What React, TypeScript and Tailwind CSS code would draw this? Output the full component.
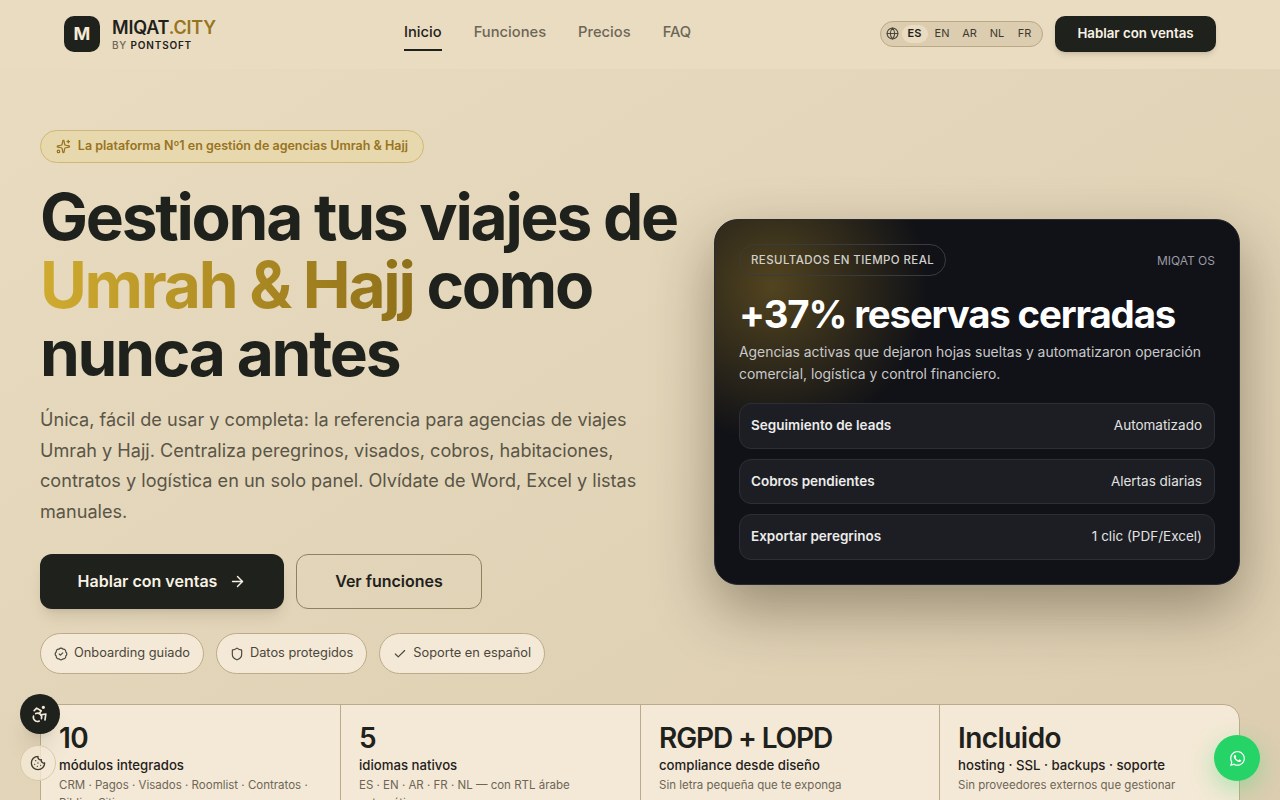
import { Accessibility, ArrowRight, BadgeCheck, Check, Cookie, Globe, Shield, Sparkles } from 'lucide-react'
import { FaWhatsapp } from 'react-icons/fa'

const navLinks = ['Inicio', 'Funciones', 'Precios', 'FAQ']
const langs = ['ES', 'EN', 'AR', 'NL', 'FR']

const rows = [
    { label: 'Seguimiento de leads', value: 'Automatizado', h: 'h-[46px] pb-px' },
    { label: 'Cobros pendientes', value: 'Alertas diarias', h: 'h-[45px]' },
    { label: 'Exportar peregrinos', value: '1 clic (PDF/Excel)', h: 'h-[46px] pb-px' },
]

const stats = [
    { big: '10', title: 'módulos integrados', text: 'CRM · Pagos · Visados · Roomlist · Contratos · Biblia · Sitios', track: 'tracking-[-0.02em]' },
    { big: '5', title: 'idiomas nativos', text: 'ES · EN · AR · FR · NL — con RTL árabe automático', track: 'tracking-[-0.02em]' },
    { big: 'RGPD + LOPD', title: 'compliance desde diseño', text: 'Sin letra pequeña que te exponga', track: 'tracking-[-0.04em]' },
    { big: 'Incluido', title: 'hosting · SSL · backups · soporte', text: 'Sin proveedores externos que gestionar', track: 'tracking-[-0.02em]' },
]

function App() {
    return (
        <div className="h-[800px] overflow-hidden bg-gradient-to-br from-[#e9dcc0] to-[#dccdb0] font-['Inter',sans-serif] text-[#1f211c]">
            <header className="h-[69px] bg-[#e9dcc0]">
                <div className="mx-auto flex h-full w-[1152px] items-center justify-between">
                    <div className="mb-0.5 flex w-[340px] items-center gap-3">
                        <div className="flex h-9 w-9 items-center justify-center rounded-[10px] bg-[#1f211c] text-lg font-bold text-[#f4ead6]">M</div>
                        <div className="mt-[2px]">
                            <div className="text-lg leading-[20px] font-semibold tracking-[-0.01em]">
                                MIQAT<span className="text-[#97741f]">.CITY</span>
                            </div>
                            <div className="text-[10px] leading-[14px] font-medium tracking-[0.08em] text-[#6d6657]">
                                BY <span className="font-semibold text-[#1f211c]">PONTSOFT</span>
                            </div>
                        </div>
                    </div>
                    <nav className="flex flex-1 items-center gap-8">
                        {navLinks.map((link, i) => (
                            <a key={link} className={`border-b-2 pt-1 pb-[7px] text-[14.72px] leading-[20px] font-medium ${i === 0 ? 'border-[#1f211c] text-[#1f211c]' : 'border-transparent text-[#6d6657]'}`}>
                                {link}
                            </a>
                        ))}
                    </nav>
                    <div className="mb-0.5 flex items-center gap-3">
                        <div className="flex h-[26px] items-center rounded-full border border-[#b9a987] bg-[#dccdb0] pr-[4.5px] pl-[4.5px]">
                            <Globe size={13} className="text-[#4a463b]" />
                            <div className="ml-[3px] flex items-center gap-[1.5px]">
                                {langs.map((l, i) => (
                                    <span key={l} className={`flex h-[18px] w-[26px] items-center justify-center rounded-full text-[11px] ${i === 0 ? 'bg-[#e9dcc0] font-semibold text-[#1f211c]' : 'text-[#3c392f]'}`}>
                                        {l}
                                    </span>
                                ))}
                            </div>
                        </div>
                        <button className="h-9 w-[161px] rounded-[10px] bg-[#1f211c] pt-px text-[13.3px] font-semibold text-[#f8f2e4] shadow-md">Hablar con ventas</button>
                    </div>
                </div>
            </header>

            <main className="mx-auto w-[1200px] pt-[61px]">
                <div className="grid grid-cols-[634px_526px] items-center gap-10">
                    <div>
                        <div className="flex h-[33px] w-[384px] items-center gap-[7px] rounded-full border border-[#cfb877] bg-[#e8d8ad] px-[15px] pb-px text-[12.5px] font-semibold whitespace-nowrap text-[#97741f]">
                            <Sparkles size={15} />
                            La plataforma Nº1 en gestión de agencias Umrah &amp; Hajj
                        </div>
                        <h1 className="mt-[20px] text-[64px] leading-[68px] font-bold tracking-[-0.035em] whitespace-nowrap">
                            Gestiona tus viajes de
                            <br />
                            <span className="bg-gradient-to-r from-[#d0ab30] to-[#8f7019] bg-clip-text text-transparent">Umrah &amp; Hajj</span> como
                            <br />
                            nunca antes
                        </h1>
                        <p className="mt-[17px] text-[18.1px] leading-[30.6px] text-[#5a5547]">
                            Única, fácil de usar y completa: la referencia para agencias de viajes Umrah y Hajj. Centraliza peregrinos, visados, cobros, habitaciones, contratos y logística en un solo panel. Olvídate de Word, Excel y listas manuales.
                        </p>
                        <div className="mt-[28px] flex gap-3">
                            <button className="flex h-[55px] w-[244px] items-center justify-center gap-3 rounded-xl bg-[#1f211c] pb-px text-base font-semibold text-[#f8f2e4] shadow-lg">
                                Hablar con ventas
                                <ArrowRight size={17} />
                            </button>
                            <button className="h-[55px] w-[186px] rounded-xl border border-[#8f8160] pb-[2px] text-base font-semibold">Ver funciones</button>
                        </div>
                        <div className="mt-6 flex gap-3">
                            <Chip icon={<BadgeCheck size={14} />} text="Onboarding guiado" />
                            <Chip icon={<Shield size={14} />} text="Datos protegidos" />
                            <Chip icon={<Check size={14} />} text="Soporte en español" />
                        </div>
                    </div>

                    <div className="-mt-px h-[366px] rounded-[24px] border border-[#2a2b30] bg-[#111217] bg-[radial-gradient(circle_at_11%_18%,#52441f_0%,#111217_28%)] p-6 shadow-[0_24px_60px_rgba(40,32,15,0.4)]">
                        <div className="flex items-center justify-between">
                            <span className="flex h-[32px] items-center rounded-full border border-[#3a3b3e] px-[11px] pt-px text-[11.5px] font-medium tracking-[0.035em] text-[#d1d0cb]">RESULTADOS EN TIEMPO REAL</span>
                            <span className="mt-[2px] text-xs text-[#9a9ba3]">MIQAT OS</span>
                        </div>
                        <div className="mt-[16px] text-[38.4px] leading-[44px] font-bold tracking-[-0.03em] text-white">+37% reservas cerradas</div>
                        <p className="mt-[5px] text-[13.9px] leading-[22px] text-[#c9c9cb]">
                            Agencias activas que dejaron hojas sueltas y automatizaron operación comercial, logística y control financiero.
                        </p>
                        <div className="mt-[18px] flex flex-col gap-[10px]">
                            {rows.map(r => (
                                <div key={r.label} className={`flex items-center justify-between rounded-xl border border-[#2e2f35] bg-[#1d1e23] pr-3 pl-[11px] text-[13.5px] ${r.h}`}>
                                    <span className="font-semibold text-[#ececec]">{r.label}</span>
                                    <span className="text-[#e2e2e2]">{r.value}</span>
                                </div>
                            ))}
                        </div>
                    </div>
                </div>

                <div className="mt-[30px] grid h-[140px] grid-cols-[300px_300px_299px_1fr] rounded-t-2xl border border-[#bcab8a] bg-[#f4e9d6]">
                    {stats.map((s, i) => (
                        <div key={s.big} className={`px-[18px] pt-[16px] ${i < 3 ? 'border-r border-[#bcab8a]' : ''}`}>
                            <div className={`text-[28px] leading-[34px] font-semibold ${s.track}`}>{s.big}</div>
                            <div className="text-[13.2px] leading-[20px] font-medium">{s.title}</div>
                            <div className="mt-px text-[11.5px] leading-[18px] text-[#6d6657]">{s.text}</div>
                        </div>
                    ))}
                </div>
            </main>

            <button className="fixed top-[694px] left-5 flex h-10 w-10 items-center justify-center rounded-full bg-[#1f211c] text-[#f4e9d6] shadow-xl">
                <Accessibility size={20} />
            </button>
            <button className="fixed top-[745px] left-5 flex h-9 w-9 items-center justify-center rounded-full border border-[#d5c8ab] bg-[#f4e9d6]/80 text-[#3c392f]">
                <Cookie size={16} />
            </button>
            <button className="fixed top-[735px] left-[1214px] flex h-[46px] w-[46px] items-center justify-center rounded-full bg-[#25d366] text-white shadow-[0_8px_24px_rgba(37,211,102,0.35)]">
                <FaWhatsapp size={17} />
            </button>
        </div>
    )
}

function Chip({ icon, text }: { icon: React.ReactNode; text: string }) {
    return (
        <span className="flex h-[41px] items-center gap-[6px] rounded-full border border-[#bcab8a] bg-[#f4e9d6] px-[13px] text-[12.8px] text-[#4a463b]">
            <span className="mt-[1px]">{icon}</span>
            <span className="mb-[3px]">{text}</span>
        </span>
    )
}

export default App
